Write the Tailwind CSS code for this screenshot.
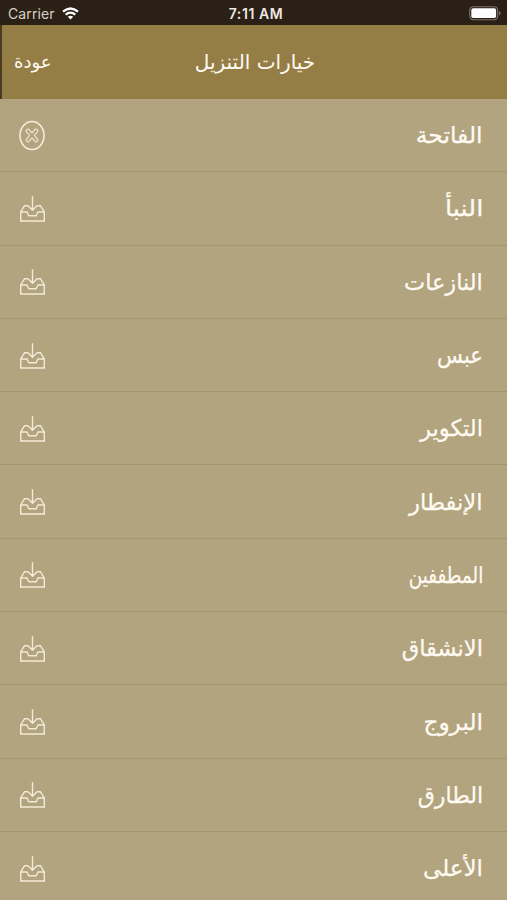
<!DOCTYPE html>
<html lang="ar"><head><meta charset="utf-8"><title>خيارات التنزيل</title>
<script src="https://cdn.jsdelivr.net/npm/@tailwindcss/browser@4"></script></head>
<body class="w-[507px] h-[900px] overflow-hidden bg-[#b2a47e] text-[#fffaf2] font-['DejaVu_Sans',sans-serif]">
<svg class="hidden">
<symbol id="tray" viewBox="0 0 28 28"><g fill="none" stroke="#f3ead8" stroke-width="1.4"><path d="M10.3 10.7H6.6L2.7 17V26H26.3V17L22.4 10.7H18.7M2.7 17H9L10.8 20.8H18.2L20 17H26.3M14.5 1.2V15M10.3 11L14.5 15.2L18.7 11"/></g></symbol>
<symbol id="cancel" viewBox="0 0 28 32"><g fill="none" stroke="#f6eddc"><ellipse cx="14" cy="15.5" rx="12" ry="14" stroke-width="1.6"/><path stroke-width="1.1" stroke-linejoin="round" d="M14 13.1L17.3 9.2Q18.5 8.5 19.5 9.8Q20.4 10.9 19.5 11.8L16.3 15.5L19.5 19.2Q20.4 20.2 19.5 21.2Q18.4 22.4 17.3 21.7L14 17.9L10.7 21.7Q9.6 22.4 8.5 21.2Q7.6 20.2 8.5 19.2L11.7 15.5L8.5 11.8Q7.6 10.9 8.5 9.8Q9.5 8.5 10.7 9.2Z"/></g></symbol>
</svg>
<div class="h-[25px] bg-[#2b2016] flex items-center justify-between pl-[8px] pr-[6px] font-['Inter',sans-serif] text-[14px]">
<div class="flex items-center gap-[7px] w-[100px] pt-[3px] text-[#d9d0c8]"><span class="text-[14px] leading-5 tracking-[0.1px]">Carrier</span>
<svg class="w-[17px] h-[13px] -mt-0.5" viewBox="0 0 17 13" fill="none" stroke="#fff" stroke-width="2.2"><path d="M1 4.7Q8.5-1.7 16 4.7M3.7 7.6Q8.5 3.5 13.3 7.6"/><path d="M8.5 12.5L5.8 9.8Q8.5 7.6 11.2 9.8Z" fill="#fff" stroke="none"/></svg></div>
<span class="font-semibold text-[14px] leading-5 pt-[3px] pl-[3px] tracking-[0.6px] text-[#eee8e2]">7:11 AM</span>
<div class="w-[100px] flex justify-end pt-[2px]"><svg class="w-[32px] h-[15px]" viewBox="0 0 32 15"><rect x=".7" y=".7" width="28" height="13" rx="3.6" fill="none" stroke="#7b726b" stroke-width="1.1"/><rect x="2.3" y="2.3" width="24.8" height="9.8" rx="1.8" fill="#fff"/><path d="M30 5v4.5q1.5-.6 1.5-2.2T30 5" fill="#7b726b"/></svg></div>
</div>
<header class="h-[74px] bg-[#957e46] border-l-2 border-[#4a3a20] relative flex items-center pl-[12px]" dir="ltr">
<span class="text-[18px] leading-none" dir="rtl">عودة</span>
<h1 class="absolute left-0 w-[506px] text-center text-[20px] leading-none" dir="rtl">خيارات التنزيل</h1>
</header>
<main id="list"></main>
<script>
// Each entry: surah name and its horizontal scale.
const names = [['الفاتحة',1.02],['النبأ',1.12],['النازعات',.975],['عبس',.92],['التكوير',.985],['الإنفطار',.985],['المطففين',.8],['الانشقاق',.98],['البروج',1.01],['الطارق',.96],['الأعلى',1]];
document.getElementById('list').innerHTML = names.map(([n,s],i)=>`<div class="h-[73.3px] border-b border-[#a5966d] flex items-center justify-between pl-[18px] pr-[24px] pt-px">${i ? '<svg class="w-[28px] h-[28px]"><use href="#tray"/></svg>' : '<svg class="w-[28px] h-[32px]"><use href="#cancel"/></svg>'}<span class="text-[23px] leading-none origin-right [-webkit-text-stroke:0.25px_#fffaf2]" style="transform:scaleX(${s})" dir="rtl">${n}</span></div>`).join('');
</script>
</body></html>
